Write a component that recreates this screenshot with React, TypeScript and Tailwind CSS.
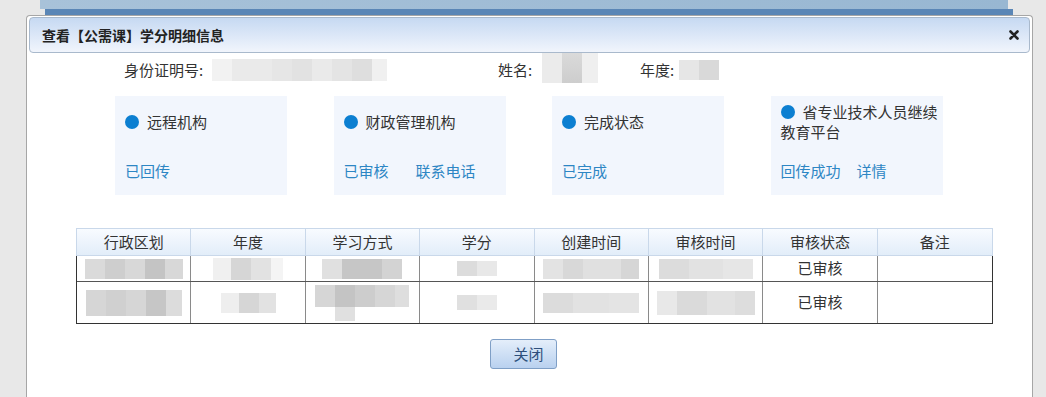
import React from 'react';

// blurred placeholder blocks, one class string per segment
type Blur = { segs: string[]; extra?: string };

const cards = [
  { title: '远程机构', links: ['已回传'], gap: '' },
  { title: '财政管理机构', links: ['已审核', '联系电话'], gap: 'ml-[27px]' },
  { title: '完成状态', links: ['已完成'], gap: '' },
  { title: '省专业技术人员继续教育平台', links: ['回传成功', '详情'], gap: 'ml-[16px]' },
];

const heads = ['行政区划', '年度', '学习方式', '学分', '创建时间', '审核时间', '审核状态', '备注'];

const rows: { h: string; cells: (Blur | string)[] }[] = [
  {
    h: 'h-[26px]',
    cells: [
      { segs: ['w-[20px] h-[20px] bg-[#dadada]', 'w-[20px] h-[20px] bg-[#cecece]', 'w-[20px] h-[20px] bg-[#d8d8d8]', 'w-[20px] h-[20px] bg-[#c4c4c4]', 'w-[18px] h-[20px] bg-[#d8d8d8]'] },
      { segs: ['w-[18px] h-[22px] bg-[#f0f0f0]', 'w-[20px] h-[22px] bg-[#d6d6d6]', 'w-[20px] h-[22px] bg-[#e2e2e2]', 'w-[12px] h-[22px] bg-[#f4f4f4]'] },
      { segs: ['w-[20px] h-[20px] bg-[#e0e0e0]', 'w-[40px] h-[20px] bg-[#c6c6c6]', 'w-[20px] h-[20px] bg-[#d3d3d3]'] },
      { segs: ['w-[20px] h-[15px] bg-[#dcdcdc]', 'w-[20px] h-[15px] bg-[#e8e8e8]'] },
      { segs: ['w-[20px] h-[20px] bg-[#e3e3e3]', 'w-[20px] h-[20px] bg-[#d8d8d8]', 'w-[20px] h-[20px] bg-[#e0e0e0]', 'w-[18px] h-[20px] bg-[#e0e0e0]', 'w-[18px] h-[20px] bg-[#d6d6d6]'] },
      { segs: ['w-[30px] h-[20px] bg-[#dcdcdc]', 'w-[34px] h-[20px] bg-[#e2e2e2]', 'w-[30px] h-[20px] bg-[#e6e6e6]'] },
      '已审核',
      '',
    ],
  },
  {
    h: 'h-[41px]',
    cells: [
      { segs: ['w-[20px] h-[26px] bg-[#d6d6d6]', 'w-[20px] h-[26px] bg-[#d0d0d0]', 'w-[20px] h-[26px] bg-[#d6d6d6]', 'w-[20px] h-[26px] bg-[#c6c6c6]', 'w-[16px] h-[26px] bg-[#dcdcdc]'] },
      { segs: ['w-[18px] h-[20px] bg-[#eeeeee]', 'w-[20px] h-[20px] bg-[#d6d6d6]', 'w-[17px] h-[20px] bg-[#e2e2e2]'] },
      { segs: ['w-[20px] h-[22px] bg-[#d6d6d6]', 'w-[20px] h-[22px] bg-[#c4c4c4]', 'w-[20px] h-[22px] bg-[#cdcdcd]', 'w-[20px] h-[22px] bg-[#d6d6d6]', 'w-[14px] h-[22px] bg-[#dedede]'], extra: 'w-[20px] h-[14px] bg-[#e0e0e0] ml-[20px]' },
      { segs: ['w-[20px] h-[15px] bg-[#e0e0e0]', 'w-[20px] h-[15px] bg-[#eaeaea]'] },
      { segs: ['w-[30px] h-[20px] bg-[#dcdcdc]', 'w-[36px] h-[20px] bg-[#e2e2e2]', 'w-[30px] h-[20px] bg-[#e4e4e4]'] },
      { segs: ['w-[20px] h-[24px] bg-[#e8e8e8]', 'w-[30px] h-[24px] bg-[#dadada]', 'w-[28px] h-[24px] bg-[#e2e2e2]', 'w-[20px] h-[24px] bg-[#dddddd]'] },
      '已审核',
      '',
    ],
  },
];

function BlurBox({ b }: { b: Blur }) {
  return (
    <div className="flex flex-col items-start">
      <div className="flex">
        {b.segs.map((s, i) => (
          <div key={i} className={s} />
        ))}
      </div>
      {b.extra && <div className={b.extra} />}
    </div>
  );
}

export default function App() {
  return (
    <div className="w-[1046px] h-[397px] overflow-hidden bg-[#e8e8e8] flex flex-col font-['Noto_Sans_CJK_SC','Microsoft_YaHei',sans-serif] text-[#333]">
      <div className="h-[9px] ml-[40px] w-[968px] bg-gradient-to-r from-[#a8c2d9] to-[#98b7d2]" />
      <div className="h-[6px] ml-[45px] w-[968px] bg-[#5a86b6]" />

      <div className="ml-[26px] w-[1007px] flex-1 bg-white border border-b-0 border-[#a6a6a6] rounded-t-[4px] px-[2px] pt-[1px]">
        {/* header */}
        <div className="h-[36px] flex items-center justify-between pl-[12px] pr-[10px] rounded-[4px] border border-[#a9b9cc] bg-gradient-to-b from-[#c6d9f2] to-[#f1f5fc]">
          <span className="text-[14px] font-bold text-[#222]">查看【公需课】学分明细信息</span>
          <svg width="10" height="10" viewBox="0 0 10 10">
            <path d="M1.5 1.5 L8.5 8.5 M8.5 1.5 L1.5 8.5" stroke="#222" strokeWidth="2.6" strokeLinecap="round" />
          </svg>
        </div>

        {/* identity line */}
        <div className="h-[34px] flex items-center pl-[95px] text-[15px]">
          <span className="w-[88px]">身份证明号:</span>
          <div className="flex">
            <div className="w-[20px] h-[22px] bg-[#f2f2f2]" />
            <div className="w-[40px] h-[22px] bg-[#eaeaea]" />
            <div className="w-[20px] h-[22px] bg-[#e6e6e6]" />
            <div className="w-[20px] h-[22px] bg-[#e2e2e2]" />
            <div className="w-[20px] h-[22px] bg-[#eaeaea]" />
            <div className="w-[20px] h-[22px] bg-[#e4e4e4]" />
            <div className="w-[20px] h-[22px] bg-[#dedede]" />
            <div className="w-[15px] h-[22px] bg-[#f0f0f0]" />
          </div>
          <span className="ml-[111px] w-[44px]">姓名:</span>
          <div className="flex -mt-[4px]">
            <div className="w-[20px] h-[30px] bg-[#ebebeb]" />
            <div className="w-[20px] h-[30px] bg-gradient-to-b from-[#dadada] to-[#cdcdcd]" />
            <div className="w-[16px] h-[30px] bg-[#efefef]" />
          </div>
          <span className="ml-[42px] w-[39px]">年度:</span>
          <div className="flex">
            <div className="w-[20px] h-[20px] bg-[#e6e6e6]" />
            <div className="w-[20px] h-[20px] bg-[#d9d9d9]" />
          </div>
        </div>

        {/* status cards */}
        <div className="mt-[9px] pl-[86px] flex gap-[46.5px]">
          {cards.map((c) => (
            <div key={c.title} className="w-[172px] h-[99px] bg-[#f2f6fd] pl-[10px]">
              <div className="mt-[5px] h-[42px] flex items-center">
                <div className="text-[15px] leading-[20px] text-[#333]">
                  <span className="inline-block w-[14px] h-[14px] rounded-full bg-[#0c7fd1] align-[-1px] mr-[8px]" />
                  {c.title}
                </div>
              </div>
              <div className="mt-[18px] h-[20px] flex text-[15px] leading-[20px] text-[#2d86c4]">
                {c.links.map((l, i) => (
                  <span key={l} className={i > 0 ? c.gap : ''}>
                    {l}
                  </span>
                ))}
              </div>
            </div>
          ))}
        </div>

        {/* detail table */}
        <div className="mt-[33px] ml-[47px] w-[917px]">
          <div className="grid grid-cols-8 h-[28px] border border-[#c9d8ea] bg-gradient-to-b from-[#f8fbff] to-[#e2edf9]">
            {heads.map((h, i) => (
              <div key={h} className={`flex items-center justify-center text-[15px] text-[#333] ${i < 7 ? 'border-r border-[#c9d8ea]' : ''}`}>
                {h}
              </div>
            ))}
          </div>
          <div className="border-x border-b border-[#333]">
            {rows.map((r, ri) => (
              <div key={ri} className={`grid grid-cols-8 ${r.h} ${ri === 0 ? 'border-b border-[#555]' : ''}`}>
                {r.cells.map((c, ci) => (
                  <div key={ci} className={`flex items-center justify-center text-[15px] text-[#333] ${ci < 7 ? 'border-r border-[#8a8a8a]' : ''}`}>
                    {typeof c === 'string' ? c : <BlurBox b={c} />}
                  </div>
                ))}
              </div>
            ))}
          </div>
        </div>

        {/* close button */}
        <div className="mt-[15px] ml-[461px]">
          <button className="w-[67px] h-[30px] rounded-[3px] border border-[#7f9fc6] bg-gradient-to-b from-[#e4eefa] to-[#b9d1ef] text-[15px] text-[#2e4f7c] pl-[10px]">
            关闭
          </button>
        </div>
      </div>
    </div>
  );
}
